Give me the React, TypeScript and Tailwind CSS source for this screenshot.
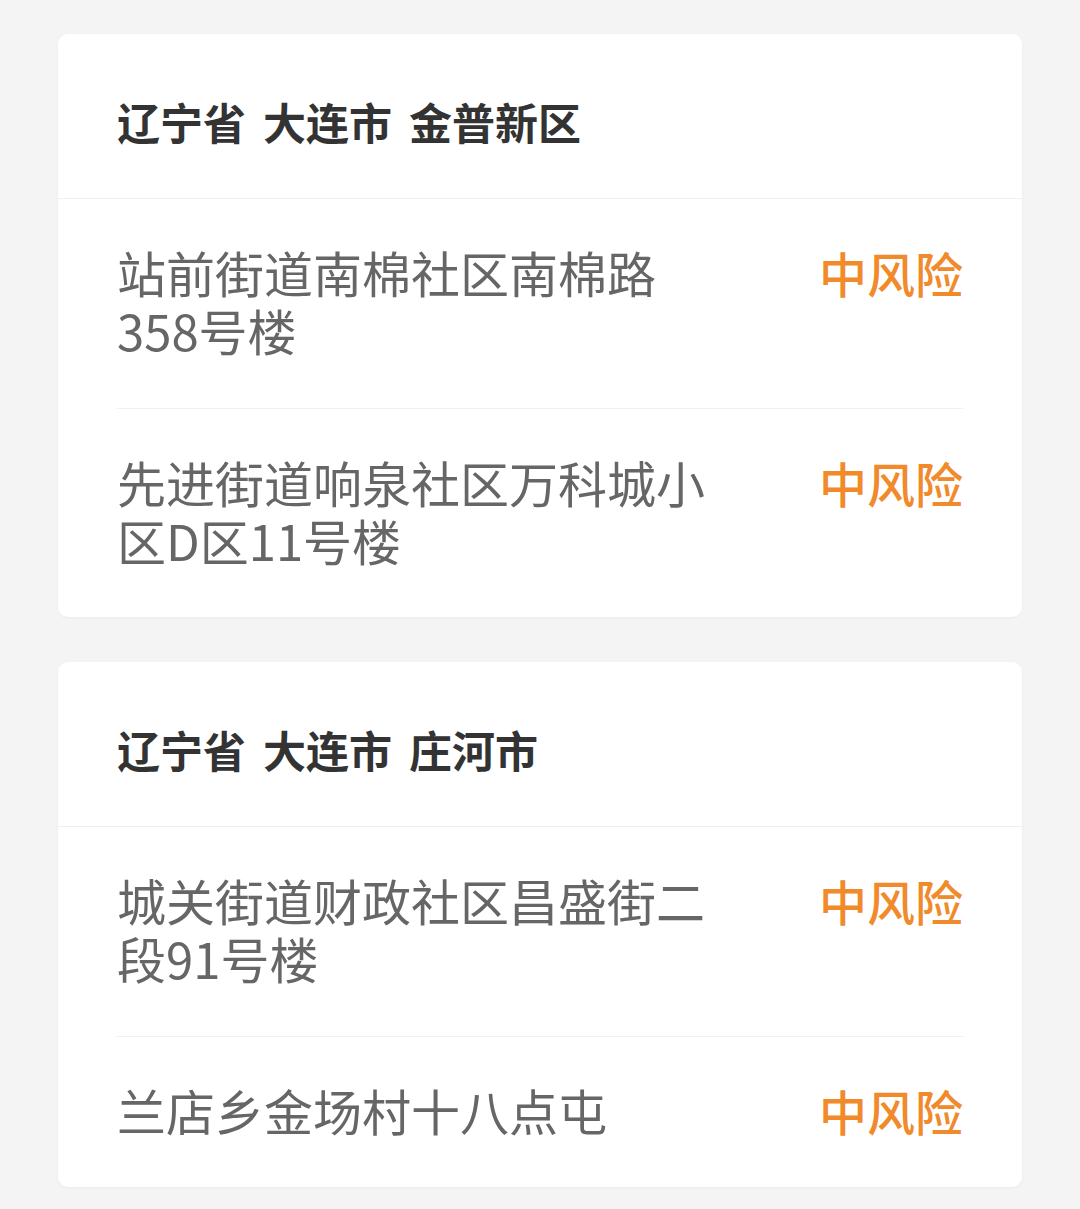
import React from "react";

type Item = { addr: string; risk: string };
type Group = { title: string[]; items: Item[] };

const groups: Group[] = [
  {
    title: ["辽宁省", "大连市", "金普新区"],
    items: [
      { addr: "站前街道南棉社区南棉路358号楼", risk: "中风险" },
      { addr: "先进街道响泉社区万科城小区D区11号楼", risk: "中风险" },
    ],
  },
  {
    title: ["辽宁省", "大连市", "庄河市"],
    items: [
      { addr: "城关街道财政社区昌盛街二段91号楼", risk: "中风险" },
      { addr: "兰店乡金场村十八点屯", risk: "中风险" },
    ],
  },
];

export default function App() {
  return (
    <div
      className="min-h-[1209px] w-[1080px] bg-[#f4f4f4] px-[58px] pt-[34px] pb-[25px] flex flex-col gap-[45px]"
      style={{ fontFamily: '"Noto Sans CJK SC", "Noto Sans", sans-serif' }}
    >
      {groups.map((g) => (
        <div key={g.title.join("")} className="bg-white rounded-[10px] shadow-[0_1px_3px_rgba(0,0,0,0.04)]">
          <div className="px-[59px] pt-[57px] pb-[47px] border-b border-[#efefef]">
            <div className="flex gap-[17px] text-[43px] leading-[60px] font-bold text-[#333333]">
              {g.title.map((t) => (
                <span key={t}>{t}</span>
              ))}
            </div>
          </div>
          <div className="px-[59px]">
            {g.items.map((it, i) => (
              <div
                key={i}
                className={
                  "flex justify-between items-start pt-[44px] " +
                  (i < g.items.length - 1 ? "pb-[49px] border-b border-[#f0f0f0]" : "pb-[48px]")
                }
              >
                <div className="w-[600px] text-[49px] leading-[58px] text-[#666666]">
                  {it.addr}
                </div>
                <div className="text-[48px] leading-[58px] font-medium text-[#f08a2a]">
                  {it.risk}
                </div>
              </div>
            ))}
          </div>
        </div>
      ))}
    </div>
  );
}
